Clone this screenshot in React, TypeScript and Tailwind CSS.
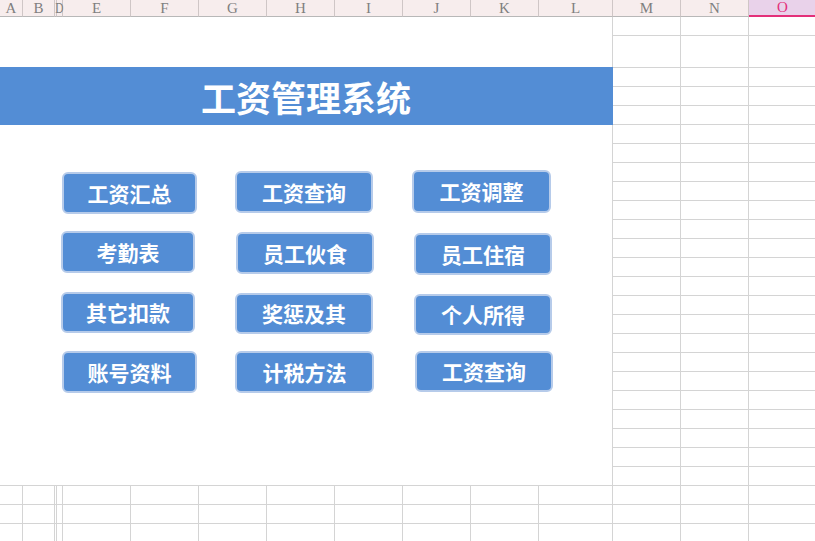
import React from "react";

type Col = { l: string; w: string };

const leftCols: Col[] = [
  { l: "A", w: "w-[23px]" },
  { l: "B", w: "w-[32px]" },
  { l: "", w: "w-[2px]" },
  { l: "D", w: "w-[6px]" },
  { l: "E", w: "w-[68px]" },
  { l: "F", w: "w-[68px]" },
  { l: "G", w: "w-[68px]" },
  { l: "H", w: "w-[68px]" },
  { l: "I", w: "w-[68px]" },
  { l: "J", w: "w-[68px]" },
  { l: "K", w: "w-[68px]" },
  { l: "L", w: "w-[74px]" },
];

const rightCols: Col[] = [
  { l: "M", w: "w-[68px]" },
  { l: "N", w: "w-[68px]" },
  { l: "O", w: "w-[68px]" },
];

type Btn = { t: string; cls: string };

const buttonRows: { cls: string; items: Btn[] }[] = [
  {
    cls: "mt-[45px]",
    items: [
      { t: "工资汇总", cls: "ml-[62px] mt-[2px] w-[135px] h-[42px]" },
      { t: "工资查询", cls: "ml-[38px] mt-[1px] w-[138px] h-[42px]" },
      { t: "工资调整", cls: "ml-[39px] mt-[0px] w-[139px] h-[43px]" },
    ],
  },
  {
    cls: "mt-[17px]",
    items: [
      { t: "考勤表", cls: "ml-[61px] mt-[0px] w-[134px] h-[42px]" },
      { t: "员工伙食", cls: "ml-[41px] mt-[1px] w-[138px] h-[42px]" },
      { t: "员工住宿", cls: "ml-[40px] mt-[2px] w-[138px] h-[42px]" },
    ],
  },
  {
    cls: "mt-[17px]",
    items: [
      { t: "其它扣款", cls: "ml-[61px] mt-[0px] w-[134px] h-[41px]" },
      { t: "奖惩及其", cls: "ml-[40px] mt-[1px] w-[138px] h-[41px]" },
      { t: "个人所得", cls: "ml-[41px] mt-[2px] w-[138px] h-[41px]" },
    ],
  },
  {
    cls: "mt-[16px]",
    items: [
      { t: "账号资料", cls: "ml-[62px] mt-[0px] w-[135px] h-[42px]" },
      { t: "计税方法", cls: "ml-[38px] mt-[0px] w-[139px] h-[42px]" },
      { t: "工资查询", cls: "ml-[41px] mt-[0px] w-[138px] h-[41px]" },
    ],
  },
];

const rightRowHeights: string[] = [
  "h-[19px]",
  "h-[32px]",
  ...Array.from({ length: 26 }, () => "h-[19px]"),
];

function HeaderCell({ c, selected }: { c: Col; selected?: boolean }) {
  return (
    <div
      className={`${c.w} shrink-0 h-[17px] flex items-center justify-center border-r border-[#cfc6c6] ${
        selected
          ? "bg-[#e9d2ea] text-[#e3307a] border-b-2 border-b-[#e3307a]"
          : "bg-[#f7eded] text-[#7f7f7f] border-b border-b-[#b8b8b8]"
      } ${c.l === "D" ? "overflow-visible" : "overflow-hidden"}`}
    >
      <span className={`leading-none ${c.l === "D" ? "-ml-[1px] scale-x-75" : ""}`}>{c.l}</span>
    </div>
  );
}

function GridRow({ cols, h }: { cols: Col[]; h: string }) {
  return (
    <div className="flex">
      {cols.map((c, i) => (
        <div
          key={i}
          className={`${c.w} ${h} shrink-0 border-r border-b border-[#d4d4d4]`}
        />
      ))}
    </div>
  );
}

function SheetButton({ b }: { b: Btn }) {
  return (
    <div
      className={`${b.cls} shrink-0 flex items-center justify-center rounded-[6px] border-2 border-[#b6cbea] bg-[#538dd5] text-white font-bold text-[21px] leading-none`}
    >
      {b.t}
    </div>
  );
}

export default function App() {
  return (
    <div className="w-[815px] h-[541px] overflow-hidden bg-white font-['Noto_Sans_CJK_SC',sans-serif]">
      {/* column header */}
      <div className="flex font-['Liberation_Serif',serif] text-[15px]">
        {leftCols.map((c, i) => (
          <HeaderCell key={i} c={c} />
        ))}
        {rightCols.map((c, i) => (
          <HeaderCell key={i} c={c} selected={c.l === "O"} />
        ))}
      </div>

      <div className="flex">
        {/* left area A-L */}
        <div className="flex flex-col w-[613px] shrink-0">
          <div className="h-[469px] w-[613px] border-r border-b border-[#d4d4d4] flex flex-col">
            <div className="mt-[50px] h-[58px] w-[613px] bg-[#538dd5] flex items-center justify-center">
              <span className="text-white font-bold text-[35px] leading-none pr-[1px]">
                工资管理系统
              </span>
            </div>
            {buttonRows.map((row, ri) => (
              <div key={ri} className={`flex items-start ${row.cls}`}>
                {row.items.map((b, bi) => (
                  <SheetButton key={bi} b={b} />
                ))}
              </div>
            ))}
          </div>
          <GridRow cols={leftCols} h="h-[19px]" />
          <GridRow cols={leftCols} h="h-[19px]" />
          <GridRow cols={leftCols} h="h-[19px]" />
        </div>

        {/* right area M-O */}
        <div className="flex flex-col">
          {rightRowHeights.map((h, i) => (
            <GridRow key={i} cols={rightCols} h={h} />
          ))}
        </div>
      </div>
    </div>
  );
}
